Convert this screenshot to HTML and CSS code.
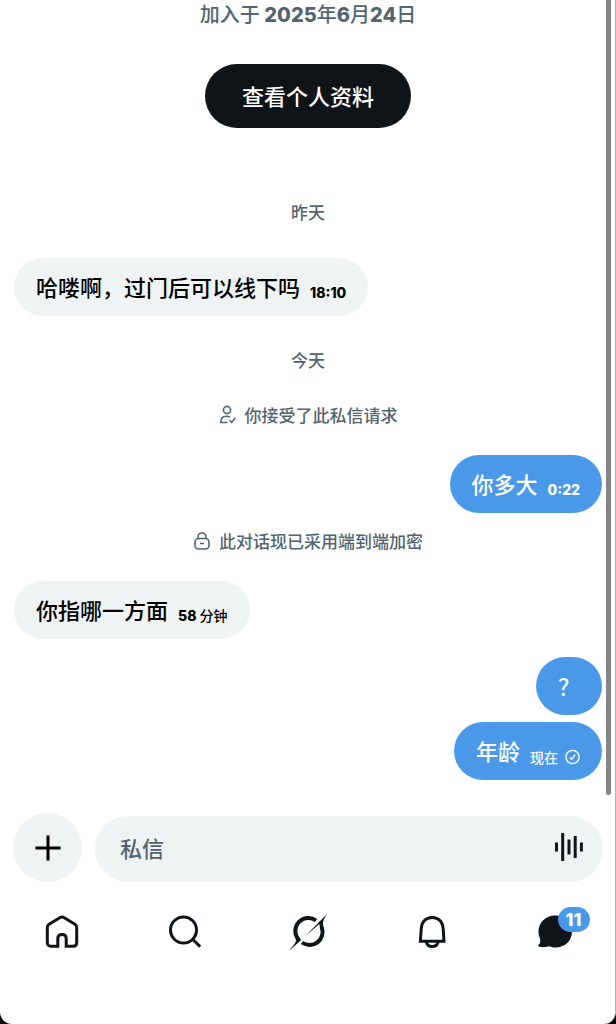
FILE: index.html
```html
<!doctype html>
<html lang="zh-CN">
    <head>
        <meta charset="UTF-8" />
        <meta name="viewport" content="width=device-width, initial-scale=1" />
        <title>私信</title>
        <link rel="stylesheet" href="styles.css">
    </head>
    <body>
        <div class="app">
            <main class="chat">
                <div class="scroll-thumb"></div>

                <section class="profile">
                    <p class="joined">加入于 <b>2025</b>年<b>6</b>月<b>24</b>日</p>
                    <button type="button" class="profile-btn">查看个人资料</button>
                </section>

                <p class="day day-first">昨天</p>
                <div class="bubble received">
                    <span class="text">哈喽啊，过门后可以线下吗</span>
                    <time class="time"><b>18:10</b></time>
                </div>

                <p class="day">今天</p>
                <p class="notice">
                    <svg class="notice-icon" viewBox="0 0 18 20" aria-hidden="true">
                        <circle cx="8" cy="5" r="3.6" />
                        <path d="M8.500 17.500H1.700C1.700 13.500 4 11.200 7.500 11.200C9 11.200 10.200 11.600 11.200 12.400" />
                        <path d="M10.500 15.300L12.700 17.400L16.300 12.700" />
                    </svg>
                    你接受了此私信请求
                </p>
                <div class="bubble sent">
                    <span class="text">你多大</span>
                    <time class="time"><b>0:22</b></time>
                </div>

                <p class="notice notice-tight">
                    <svg class="notice-icon" viewBox="0 0 18 20" aria-hidden="true">
                        <rect x="2" y="7.500" width="14" height="10.500" rx="3.500" />
                        <path d="M5 7.500V6C5 3.500 6.600 2 9 2S13 3.500 13 6V7.500M7 12.500H11" />
                    </svg>
                    此对话现已采用端到端加密
                </p>
                <div class="bubble received">
                    <span class="text">你指哪一方面</span>
                    <time class="time"><b>58</b> 分钟</time>
                </div>

                <div class="sent-group">
                    <div class="bubble sent">
                        <span class="text">？</span>
                    </div>
                    <div class="bubble sent">
                        <span class="text">年龄</span>
                        <div class="status">
                            <time class="time">现在</time>
                            <svg class="check" viewBox="0 0 16 16" aria-hidden="true">
                                <circle cx="8.500" cy="8" r="6.600" />
                                <path d="M5.700 8.400L7.700 10.300L11.200 5.800" />
                            </svg>
                        </div>
                    </div>
                </div>
            </main>

            <form class="composer">
                <button type="button" class="add-btn" aria-label="添加">
                    <svg viewBox="0 0 26 26" aria-hidden="true">
                        <path d="M13 0.500V25.500M0.500 13H25.500" />
                    </svg>
                </button>
                <div class="field">
                    <input type="text" class="field-input" placeholder="私信" aria-label="私信" />
                    <button type="button" class="voice-btn" aria-label="语音">
                        <svg viewBox="0 0 30 30" aria-hidden="true">
                            <path d="M2.500 10.500V19.500M8.700 1V29M15 7.500V22.500M21.200 4V26M27.400 10.500V19.500" />
                        </svg>
                    </button>
                </div>
            </form>

            <nav class="tabs">
                <a href="#" class="tab" aria-label="主页">
                    <svg viewBox="0 0 40 40" aria-hidden="true">
                        <path d="M18.200 5.500C19.300 4.800 20.700 4.800 21.800 5.500L33 12.200C34.200 13 34.700 14 34.700 15.300V30.500C34.700 32.900 33.100 34.300 31 34.300H24.200V26.500C24.200 23.900 22.500 22.500 20 22.500S15.800 23.900 15.800 26.500V34.300H9C6.900 34.300 5.300 32.900 5.300 30.500V15.300C5.300 14 5.800 13 7 12.200Z" />
                    </svg>
                </a>
                <a href="#" class="tab" aria-label="搜索">
                    <svg viewBox="0 0 40 40" aria-hidden="true">
                        <circle cx="18.500" cy="18" r="13" />
                        <path d="M27.800 27.500L35.200 34.700" />
                    </svg>
                </a>
                <a href="#" class="tab" aria-label="Grok">
                    <svg viewBox="0 0 40 40" aria-hidden="true">
                        <path class="ring" d="M28 8.500A13 13 0 0 0 10.500 27.500" />
                        <path class="ring" d="M14 30.500A13 13 0 0 0 33.800 15.500" />
                        <path class="solid" d="M8.200 24L13.300 27.500L11 30L1 38.800C4 34.500 8.500 31.500 8 27Z" />
                        <path class="solid" d="M16.800 24.500L39.500 1.500C36.500 5.500 34.600 9 35 12L35.500 16L32 16.500L31.300 12Z" />
                    </svg>
                </a>
                <a href="#" class="tab" aria-label="通知">
                    <svg viewBox="0 0 40 40" aria-hidden="true">
                        <path d="M9.400 29.200L10.200 17C10.700 10 14.700 5.500 21.200 5.500S31.700 10 32.200 17L33 29.200Z" />
                        <path d="M15.200 29.500C15.700 32.800 18 34.500 21.200 34.500S26.700 32.800 27.200 29.500" />
                    </svg>
                </a>
                <a href="#" class="tab" aria-label="私信，11 条未读">
                    <svg viewBox="0 0 40 40" aria-hidden="true">
                        <path class="solid" d="M21.300 3.500C31 3.500 38 10.500 38 19.500C38 28.800 31 35.500 21.300 35.500C19.300 35.500 17.300 35.200 15.500 34.300C12.500 35.100 8.500 35.700 4.800 34.500C3.800 34.100 3.900 33.400 4.700 32.800C6.700 31.100 6.600 28.800 5.800 26C5 24 4.500 22 4.500 19.500C4.500 10.500 11.500 3.500 21.300 3.500Z" />
                    </svg>
                    <span class="badge">11</span>
                </a>
            </nav>
        </div>
    </body>
</html>
```
FILE: styles.css
```css
* {
    box-sizing: border-box;
}
body {
    margin: 0;
    background-color: #000;
    color: #000;
    font-family: "Noto Sans CJK SC", sans-serif;
    font-weight: 500;
}
p {
    margin: 0;
}
b,
.badge {
    font-family: Inter, "Noto Sans CJK SC", sans-serif;
    font-weight: 800;
}
button {
    border: none;
    padding: 0;
    font: inherit;
    cursor: pointer;
}
svg {
    display: block;
    fill: none;
    stroke: currentColor;
}
.app {
    display: flex;
    flex-direction: column;
    min-height: 100vh;
    background-color: #fff;
    border-right: 1px solid #b4b4b4;
    border-radius: 0 0 12px 12px;
}

/* Conversation */
.chat {
    position: relative;
    display: flex;
    flex-direction: column;
    padding: 0 13px 0 14px;
}
.scroll-thumb {
    position: absolute;
    top: 0;
    right: 4px;
    bottom: -15px;
    width: 5px;
    background-color: #858585;
    border-radius: 0 0 3px 3px;
}
.profile {
    display: flex;
    flex-direction: column;
    align-items: center;
    gap: 35px;
}
.joined {
    color: #536471;
    font-size: 20px;
    line-height: 28px;
}
.profile-btn {
    height: 64px;
    padding: 0 37px 3px;
    border-radius: 32px;
    background-color: #0f1419;
    color: #fff;
    font-size: 22px;
}
.day,
.notice {
    color: #536471;
    font-size: 17px;
    line-height: 22px;
    text-align: center;
}
.day {
    margin: 33px 0;
}
.day-first {
    margin: 73px 0 35px;
}
.notice {
    display: flex;
    justify-content: center;
    align-items: center;
    gap: 8px;
    margin-bottom: 29px;
}
.notice-tight {
    margin-top: 17px;
}
.notice-icon {
    width: 18px;
    height: 20px;
    stroke-width: 1.6;
}
.bubble {
    display: flex;
    align-items: flex-end;
    gap: 10px;
    padding: 11px 22px 13px;
    border-radius: 29px;
}
.received {
    align-self: flex-start;
    background-color: #eff3f4;
}
.sent {
    align-self: flex-end;
    background-color: #4a99e9;
    color: #fff;
}
.text {
    font-size: 22px;
    line-height: 34px;
}
.time {
    font-size: 14px;
    line-height: 20px;
}
.status {
    display: flex;
    align-items: center;
    gap: 6px;
}
.check {
    width: 16px;
    height: 16px;
    stroke-width: 1.4;
}
.sent-group {
    display: flex;
    flex-direction: column;
    gap: 7px;
    margin-top: 18px;
}

/* Message box */
.composer {
    display: flex;
    align-items: flex-end;
    gap: 13px;
    margin-top: 33px;
    padding: 0 12px 0 13px;
}
.add-btn {
    display: flex;
    justify-content: center;
    align-items: center;
    flex: none;
    width: 69px;
    height: 69px;
    border-radius: 50%;
    background-color: #eff3f4;
    color: #000;
}
.add-btn svg {
    width: 26px;
    height: 26px;
    stroke-width: 3;
}
.field {
    display: flex;
    align-items: center;
    flex: 1;
    height: 66px;
    padding: 0 19px 4px 25px;
    border-radius: 33px;
    background-color: #eff3f4;
}
.field-input {
    flex: 1;
    min-width: 0;
    padding: 0;
    border: none;
    outline: none;
    background: none;
    font: inherit;
    font-size: 22px;
}
.field-input::placeholder {
    color: #536471;
    opacity: 1;
}
.voice-btn {
    background: none;
    color: #0f1419;
}
.voice-btn svg {
    width: 30px;
    height: 30px;
    stroke-width: 3;
}

/* Bottom tabs */
.tabs {
    display: flex;
    margin-top: 30px;
}
.tab {
    position: relative;
    display: flex;
    justify-content: center;
    flex: 1;
    color: #0f1419;
}
.tab svg {
    width: 40px;
    height: 40px;
    stroke-width: 3;
}
.ring {
    stroke-width: 4;
}
.solid {
    fill: currentColor;
    stroke: none;
}
.badge {
    position: absolute;
    top: -5px;
    left: 50%;
    min-width: 32px;
    margin-left: 4px;
    border-radius: 13px;
    background-color: #4a99e9;
    color: #fff;
    font-size: 18px;
    line-height: 25px;
    text-align: center;
}
```
